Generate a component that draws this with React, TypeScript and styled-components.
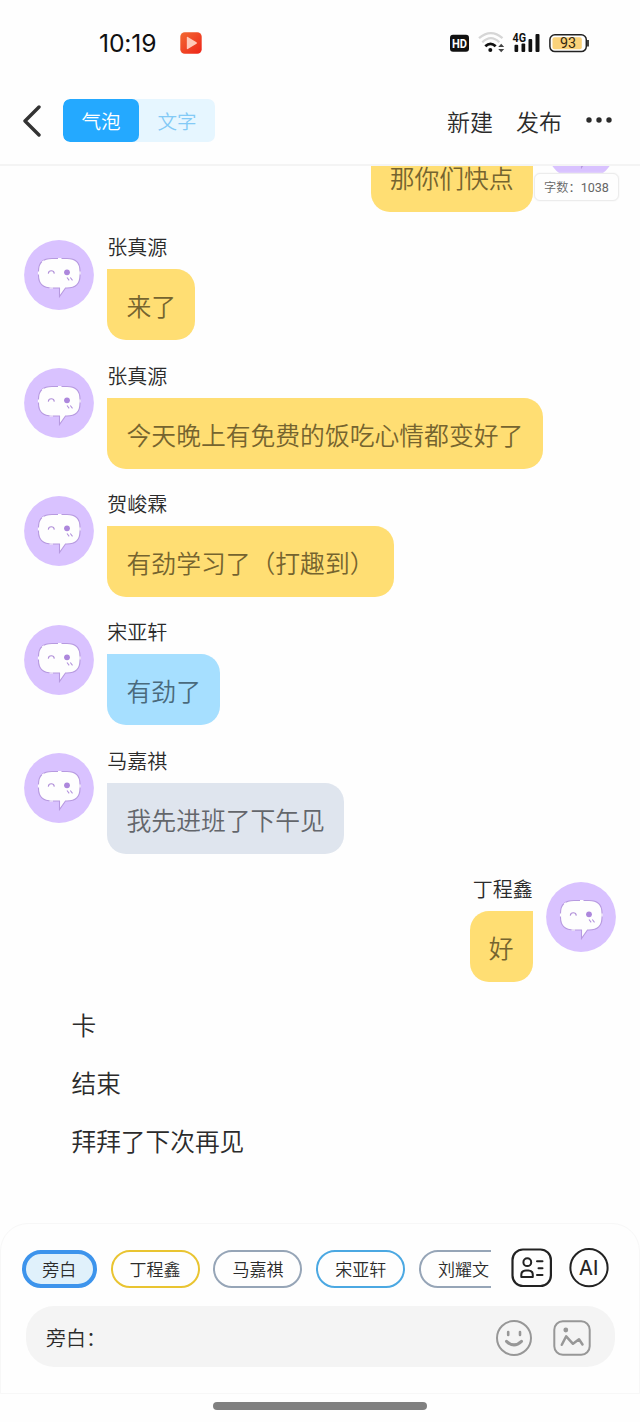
import React from "react";
import styled, { createGlobalStyle } from "styled-components";

const GlobalStyle = createGlobalStyle`
  * { box-sizing: border-box; }
  body {
    margin: 0;
    background: #fefefe;
    color: #2b2b2b;
    font-family: "Noto Sans CJK SC", sans-serif;
    font-weight: 350;
  }
  svg { display: block; flex: none; }
`;

const Screen = styled.div`
  width: 640px;
  height: 1422px;
  display: flex;
  flex-direction: column;
  overflow: hidden;
  white-space: nowrap;
`;

const StatusBar = styled.div`
  height: 86px;
  flex: none;
  display: flex;
  align-items: center;
  padding: 0 51px 0 99px;
`;

const Clock = styled.div`
  width: 81px;
  font: 400 24.7px/30px Inter, sans-serif;
  letter-spacing: -0.15px;
  color: #111;
`;

const StatusIcons = styled.div`
  margin-left: auto;
  display: flex;
  align-items: center;
`;

const Header = styled.header`
  height: 80px;
  flex: none;
  display: flex;
  align-items: center;
  padding: 0 27px 9px 22px;
  border-bottom: 2px solid #f4f4f4;
`;

const Segments = styled.div`
  display: flex;
  width: 152px;
  height: 43px;
  margin-left: 22px;
  border-radius: 7px;
  background: #e6f6ff;
  overflow: hidden;
`;

const Segment = styled.div<{ $active?: boolean }>`
  width: 76px;
  border-radius: 7px;
  text-align: center;
  font-size: 19.6px;
  line-height: 43px;
  color: ${(p) => (p.$active ? "#fff" : "#83caf6")};
  background: ${(p) => (p.$active ? "#24a9ff" : "transparent")};
`;

const HeaderActions = styled.div`
  margin-left: auto;
  display: flex;
  align-items: center;
  gap: 23px;
  font-size: 23px;
  line-height: 34px;
`;

const ChatArea = styled.main`
  flex: 1;
  min-height: 0;
  position: relative;
  display: flex;
  flex-direction: column;
  justify-content: flex-end;
  overflow: hidden;
  padding: 0 23.7px 54.4px;
`;

const WordCount = styled.div`
  position: absolute;
  top: 7px;
  right: 21px;
  width: 85px;
  height: 28px;
  border: 1px solid #ececec;
  border-radius: 6px;
  background: #fefefe;
  box-shadow: 0 0 2px #eee;
  color: #666;
  font: 350 12.2px/27px "Noto Sans CJK SC", sans-serif;
  text-align: center;
`;

const Count = styled.span`
  font: 400 12.6px Roboto, sans-serif;
`;

const Message = styled.div<{ $own?: boolean }>`
  display: flex;
  flex: none;
  flex-direction: ${(p) => (p.$own ? "row-reverse" : "row")};
  gap: 13.6px;
  height: 103px;
  margin-bottom: 25.4px;
`;

const AvatarSvg = styled.svg`
  margin-top: 2.4px;
`;

const MessageBody = styled.div<{ $own?: boolean }>`
  display: flex;
  flex-direction: column;
  align-items: ${(p) => (p.$own ? "flex-end" : "flex-start")};
`;

const Sender = styled.div`
  height: 32px;
  font-size: 20px;
  line-height: 20px;
`;

const Bubble = styled.div<{ $color: string; $text: string; $own?: boolean }>`
  height: 71px;
  padding: 0 ${(p) => (p.$own ? 19.1 : 19.25)}px;
  border-radius: ${(p) => (p.$own ? "19px 0 19px 19px" : "0 19px 19px 19px")};
  background: ${(p) => p.$color};
  color: ${(p) => p.$text};
  font-size: 24.8px;
  line-height: 72px;
`;

const Narration = styled.div`
  flex: none;
  margin-top: -12.9px;
  padding-left: 47.8px;
`;

const NarrationLine = styled.div`
  height: 58px;
  font-size: 24.7px;
  line-height: 58px;
`;

const Composer = styled.footer`
  height: 171px;
  flex: none;
  border: 1px solid #f7f7f7;
  border-radius: 28px 28px 0 0;
  padding: 23px 24px 0 20px;
`;

const SpeakerBar = styled.div`
  display: flex;
  height: 41px;
  align-items: center;
`;

const Chips = styled.div`
  width: 470px;
  height: 41px;
  padding: 2px 0 0 0.8px;
  display: flex;
  align-items: center;
  gap: 13.8px;
  overflow: hidden;
`;

const Chip = styled.div<{ $color: string; $selected?: boolean }>`
  flex: none;
  width: ${(p) => (p.$selected ? 75 : 89)}px;
  height: 38px;
  border: ${(p) => (p.$selected ? "4px" : "2px")} solid ${(p) => p.$color};
  border-radius: 19px;
  background: ${(p) => (p.$selected ? "#e0f1fb" : "transparent")};
  font-size: 17px;
  line-height: ${(p) => (p.$selected ? 29 : 33)}px;
  text-align: center;
`;

const SpeakerTools = styled.div`
  display: flex;
  gap: 17px;
  margin-left: 20px;
`;

const InputBox = styled.div`
  display: flex;
  align-items: center;
  height: 61px;
  margin: 18px 0 0 5px;
  padding: 2px 24px 0 20px;
  border-radius: 28px;
  background: #f4f4f4;
  font-size: 20px;
`;

const InputTools = styled.div`
  display: flex;
  gap: 20px;
  margin-left: auto;
`;

const HomeArea = styled.div`
  height: 28px;
  flex: none;
  padding-top: 8px;
`;

const HomeBar = styled.div`
  width: 214px;
  height: 8px;
  margin: 0 auto;
  border-radius: 4px;
  background: #808080;
`;

const Avatar = () => (
  <AvatarSvg width="70" height="70" viewBox="0 0 70 70">
    <circle cx="35" cy="35" r="34.900" fill="#d9c2ff" />
    <path
      d="M28 18.500H43Q56 18.500 56 31V35.500Q56 48 43 48H41.500L35.500 56.500V48H28Q14.500 48 14.500 35.500V31Q14.500 18.500 28 18.500Z"
      fill="#fefefe"
      stroke="#b79ae0"
      strokeWidth="1.100"
    />
    <path d="M34 18.500H37.500M14.500 31.500V34.500M56 31.500V34.500M18 22.300L20 20.600M25.500 48H29" stroke="#fefefe" strokeWidth="1.200" />
    <path d="M24.300 33.600Q24.600 30.800 27.300 30.800Q30 30.800 30.300 33.600" fill="none" stroke="#b08fd8" strokeWidth="1.100" />
    <circle cx="43" cy="32.300" r="2.900" fill="#ad87dc" />
    <path d="M43 37.500L45.200 40.300M46.300 37.500L48.500 40.300" stroke="#b292dc" strokeWidth="1.100" />
  </AvatarSvg>
);

const PlayBadge = () => (
  <svg width="22" height="22" viewBox="0 0 22 22">
    <defs>
      <linearGradient id="play" x1="0" y1="0" x2="1" y2="1">
        <stop stopColor="#f26a32" />
        <stop offset="1" stopColor="#ee2418" />
      </linearGradient>
    </defs>
    <rect x=".3" y=".3" width="21.400" height="21.400" rx="4.500" fill="url(#play)" />
    <path d="M6.800 5.500Q6.800 4.500 7.800 5L16.500 10.200Q17.500 11 16.500 11.700L7.800 17Q6.800 17.500 6.800 16.500Z" fill="#ffc9b8" />
  </svg>
);

const SignalIcons = () => (
  <svg width="140" height="24" viewBox="449 31 140 24">
    <rect x="450" y="34.800" width="19" height="17" rx="3" fill="#111" />
    <text x="459.500" y="47.800" textAnchor="middle" fontFamily="Roboto" fontWeight="700" fontSize="12.500" textLength="15" lengthAdjust="spacingAndGlyphs" fill="#fff">HD</text>
    <g fill="none" strokeWidth="2.300">
      <path d="M479 38.200Q491 28 502.500 38.200" stroke="#d6d6d6" />
      <path d="M482.300 42.300Q491 34 499.300 42.300" stroke="#d6d6d6" />
      <path d="M485.300 46.200Q490.500 41.500 495.700 46.200" stroke="#111" strokeWidth="2.800" />
    </g>
    <circle cx="490.300" cy="50" r="2" fill="#111" />
    <path d="M498.200 47L501.200 43.700L504.200 47ZM498.200 49L501.200 52.300L504.200 49Z" fill="#444" />
    <text x="512.500" y="42" fontFamily="Roboto" fontWeight="700" fontSize="13" textLength="13.500" lengthAdjust="spacingAndGlyphs" fill="#111">4G</text>
    <g fill="#111">
      <rect x="514.500" y="44.800" width="3.700" height="7.200" rx="1" />
      <rect x="521.500" y="43.500" width="3.700" height="8.500" rx="1" />
      <rect x="528.500" y="39" width="3.700" height="13" rx="1" />
      <rect x="535.500" y="34" width="4" height="18" rx="1" />
    </g>
    <rect x="549.900" y="34.800" width="36.400" height="16.800" rx="5" fill="#fefefe" stroke="#222" strokeWidth="1.500" />
    <rect x="552.500" y="37.200" width="29.300" height="12" rx="2" fill="#fad27a" />
    <path d="M588 40V46.500" stroke="#222" strokeWidth="1.700" />
    <text x="568" y="48.200" textAnchor="middle" fontFamily="Roboto" fontWeight="400" fontSize="14.300" fill="#332710">93</text>
  </svg>
);

const BackIcon = () => (
  <svg width="19" height="32" viewBox="0 0 19 32" fill="none" stroke="#333" strokeWidth="3.400" strokeLinecap="round" strokeLinejoin="round">
    <path d="M17 2L3 16L17 30" />
  </svg>
);

const MoreIcon = () => (
  <svg width="28" height="8" viewBox="0 0 28 8" fill="#2c2c2c">
    <circle cx="4" cy="3" r="2.700" />
    <circle cx="14" cy="3" r="2.700" />
    <circle cx="24" cy="3" r="2.700" />
  </svg>
);

const RosterIcon = () => (
  <svg width="41" height="40" viewBox="0 0 41 40" fill="none" stroke="#222" strokeWidth="2.200" strokeLinecap="round">
    <rect x="1.500" y="1.500" width="38.400" height="36.500" rx="10.500" />
    <circle cx="16.300" cy="14.200" r="3.900" strokeWidth="2" />
    <path d="M10.300 29V27Q10.300 22.500 15 22.500H17.500Q21.800 22.500 21.800 27V29Z" strokeWidth="2" strokeLinejoin="round" />
    <path d="M26 13.300H31.500M27.500 20.300H31.500M26 27H31.500" strokeWidth="2" />
  </svg>
);

const AiIcon = () => (
  <svg width="40" height="40" viewBox="0 0 40 40">
    <circle cx="20" cy="19.700" r="18.600" fill="none" stroke="#222" strokeWidth="2" />
    <text x="19.700" y="26.700" textAnchor="middle" fontFamily="Inter" fontWeight="400" fontSize="20" fill="#222" stroke="#222" strokeWidth=".2">AI</text>
  </svg>
);

const SmileIcon = () => (
  <svg width="38" height="38" viewBox="0 0 38 38" fill="none" stroke="#979797" strokeLinecap="round">
    <circle cx="19" cy="19" r="17" strokeWidth="2" />
    <path d="M13.200 13V16M25 13V16" strokeWidth="2.600" />
    <path d="M11.500 22.300Q19 29.500 26.500 22.300" strokeWidth="3" />
  </svg>
);

const ImageIcon = () => (
  <svg width="38" height="38" viewBox="0 0 38 38" fill="none" stroke="#979797" strokeLinecap="round" strokeLinejoin="round">
    <rect x="1.300" y="2.200" width="35.400" height="33.600" rx="8.500" strokeWidth="2" />
    <circle cx="12.800" cy="11" r="2.400" fill="#979797" stroke="none" />
    <path d="M8.800 25.800L13.200 17.300L20 24.800L26 20.300L29.500 25.500" strokeWidth="2.500" />
  </svg>
);

const tones = {
  yellow: ["#ffde73", "#75642f"],
  blue: ["#a6dfff", "#4a6a7c"],
  gray: ["#dfe5ee", "#63666b"],
};

const messages: { name?: string; text: string; tone: keyof typeof tones; own?: boolean }[] = [
  { text: "那你们快点", tone: "yellow", own: true },
  { name: "张真源", text: "来了", tone: "yellow" },
  { name: "张真源", text: "今天晚上有免费的饭吃心情都变好了", tone: "yellow" },
  { name: "贺峻霖", text: "有劲学习了（打趣到）", tone: "yellow" },
  { name: "宋亚轩", text: "有劲了", tone: "blue" },
  { name: "马嘉祺", text: "我先进班了下午见", tone: "gray" },
  { name: "丁程鑫", text: "好", tone: "yellow", own: true },
];

const speakers = [
  { name: "旁白", color: "#3d94ec", selected: true },
  { name: "丁程鑫", color: "#e9c431" },
  { name: "马嘉祺", color: "#96a5b7" },
  { name: "宋亚轩", color: "#4ba8e2" },
  { name: "刘耀文", color: "#96a5b7" },
];

export default function App() {
  return (
    <Screen>
      <GlobalStyle />
      <StatusBar>
        <Clock>10:19</Clock>
        <PlayBadge />
        <StatusIcons>
          <SignalIcons />
        </StatusIcons>
      </StatusBar>
      <Header>
        <BackIcon />
        <Segments>
          <Segment $active>气泡</Segment>
          <Segment>文字</Segment>
        </Segments>
        <HeaderActions>
          <span>新建</span>
          <span>发布</span>
          <MoreIcon />
        </HeaderActions>
      </Header>
      <ChatArea>
        {messages.map((m, i) => (
          <Message key={i} $own={m.own}>
            <Avatar />
            <MessageBody $own={m.own}>
              <Sender>{m.name}</Sender>
              <Bubble $color={tones[m.tone][0]} $text={tones[m.tone][1]} $own={m.own}>
                {m.text}
              </Bubble>
            </MessageBody>
          </Message>
        ))}
        <Narration>
          <NarrationLine>卡</NarrationLine>
          <NarrationLine>结束</NarrationLine>
          <NarrationLine>拜拜了下次再见</NarrationLine>
        </Narration>
        <WordCount>
          字数：<Count>1038</Count>
        </WordCount>
      </ChatArea>
      <Composer>
        <SpeakerBar>
          <Chips>
            {speakers.map((s) => (
              <Chip key={s.name} $color={s.color} $selected={s.selected}>
                {s.name}
              </Chip>
            ))}
          </Chips>
          <SpeakerTools>
            <RosterIcon />
            <AiIcon />
          </SpeakerTools>
        </SpeakerBar>
        <InputBox>
          <span>旁白：</span>
          <InputTools>
            <SmileIcon />
            <ImageIcon />
          </InputTools>
        </InputBox>
      </Composer>
      <HomeArea>
        <HomeBar />
      </HomeArea>
    </Screen>
  );
}
